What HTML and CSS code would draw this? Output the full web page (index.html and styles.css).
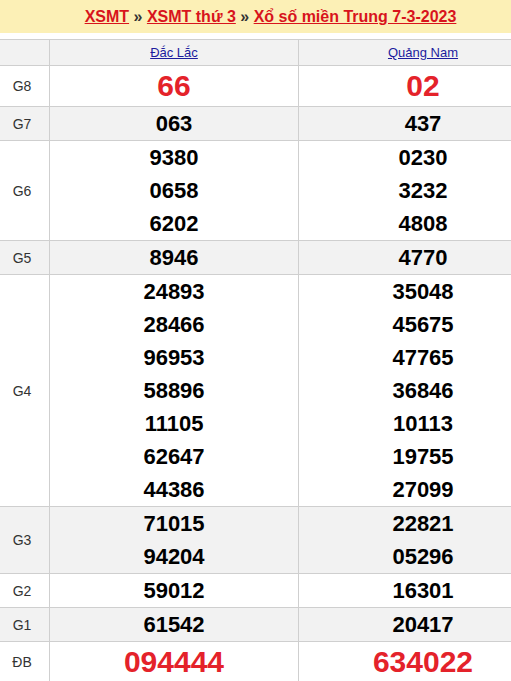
FILE: index.html
```html
<!DOCTYPE html>
<html lang="vi">
<head>
<meta charset="utf-8">
<title>XSMT 7-3-2023</title>
<link rel="stylesheet" href="styles.css">
</head>
<body>
<div class="wrap">
  <h2 class="title">
    <a href="#">XSMT</a> <span class="sep">»</span> <a href="#">XSMT thứ 3</a> <span class="sep">»</span> <a href="#">Xổ số miền Trung 7-3-2023</a>
  </h2>
  <table class="kq">
    <colgroup>
      <col class="c-label">
      <col class="c-prov">
      <col class="c-prov">
    </colgroup>
    <tr class="head">
      <th></th>
      <th><a href="#">Đắc Lắc</a></th>
      <th><a href="#">Quảng Nam</a></th>
    </tr>
    <tr class="big">
      <td class="lbl">G8</td>
      <td><div class="n red">66</div></td>
      <td><div class="n red">02</div></td>
    </tr>
    <tr class="alt">
      <td class="lbl">G7</td>
      <td><div class="n">063</div></td>
      <td><div class="n">437</div></td>
    </tr>
    <tr>
      <td class="lbl">G6</td>
      <td><div class="n">9380</div><div class="n">0658</div><div class="n">6202</div></td>
      <td><div class="n">0230</div><div class="n">3232</div><div class="n">4808</div></td>
    </tr>
    <tr class="alt">
      <td class="lbl">G5</td>
      <td><div class="n">8946</div></td>
      <td><div class="n">4770</div></td>
    </tr>
    <tr>
      <td class="lbl">G4</td>
      <td>
        <div class="n">24893</div><div class="n">28466</div><div class="n">96953</div><div class="n">58896</div><div class="n">11105</div><div class="n">62647</div><div class="n">44386</div>
      </td>
      <td>
        <div class="n">35048</div><div class="n">45675</div><div class="n">47765</div><div class="n">36846</div><div class="n">10113</div><div class="n">19755</div><div class="n">27099</div>
      </td>
    </tr>
    <tr class="alt">
      <td class="lbl">G3</td>
      <td><div class="n">71015</div><div class="n">94204</div></td>
      <td><div class="n">22821</div><div class="n">05296</div></td>
    </tr>
    <tr>
      <td class="lbl">G2</td>
      <td><div class="n">59012</div></td>
      <td><div class="n">16301</div></td>
    </tr>
    <tr class="alt">
      <td class="lbl">G1</td>
      <td><div class="n">61542</div></td>
      <td><div class="n">20417</div></td>
    </tr>
    <tr class="big">
      <td class="lbl">ĐB</td>
      <td><div class="n red">094444</div></td>
      <td><div class="n red">634022</div></td>
    </tr>
  </table>
</div>
</body>
</html>
```

FILE: styles.css
```css
html, body {
  margin: 0;
  padding: 0;
  background: #fff;
  overflow: hidden;
}
body {
  font-family: "Liberation Sans", Arial, sans-serif;
  color: #000;
}
.wrap {
  width: 553px;
  margin-left: -6px;
}
.title {
  margin: 0 0 6px;
  height: 33px;
  line-height: 33px;
  background: #fcf0b6;
  text-align: center;
  font-size: 16px;
  font-weight: bold;
}
.title a {
  color: #d8141c;
  text-decoration: underline;
}
.title .sep {
  color: #333;
}
.kq {
  width: 553px;
  border-collapse: collapse;
  table-layout: fixed;
}
.c-label { width: 55px; }
.c-prov { width: 249px; }
.kq th, .kq td {
  border: 1px solid #cfcfcf;
  padding: 0;
  text-align: center;
  vertical-align: middle;
}
.kq tr.head th {
  height: 25px;
  background: #f2f2f2;
  font-size: 13px;
  font-weight: normal;
}
.kq tr.head a {
  color: #1c1c9e;
  text-decoration: underline;
}
.kq tr.alt td {
  background: #f2f2f2;
}
.lbl {
  font-size: 14px;
  color: #333;
}
.n {
  font-size: 22px;
  font-weight: bold;
  line-height: 33px;
  height: 33px;
}
.big .n {
  font-size: 30px;
  line-height: 40px;
  height: 40px;
}
.n.red {
  color: #e4222a;
}
```
